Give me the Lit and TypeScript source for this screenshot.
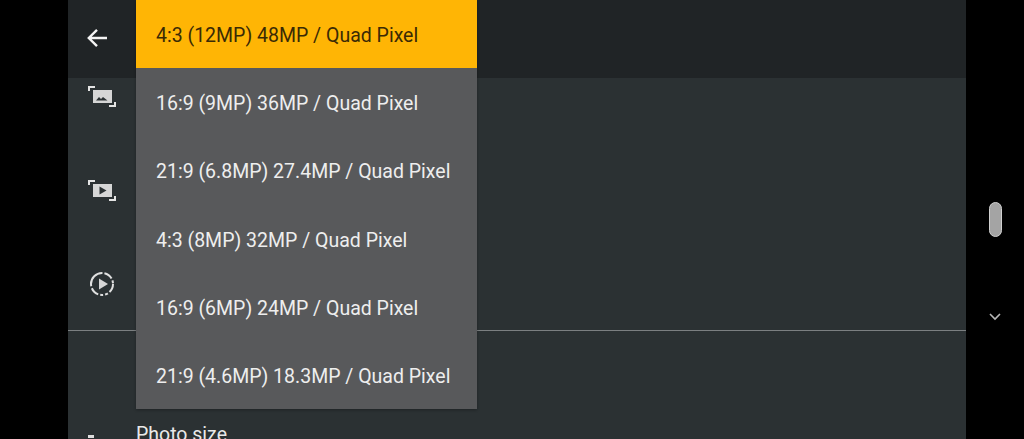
import { LitElement, html, css, svg } from "lit";
import { customElement } from "lit/decorators.js";

const ITEMS = [
  "4:3 (12MP) 48MP / Quad Pixel",
  "16:9 (9MP) 36MP / Quad Pixel",
  "21:9 (6.8MP) 27.4MP / Quad Pixel",
  "4:3 (8MP) 32MP / Quad Pixel",
  "16:9 (6MP) 24MP / Quad Pixel",
  "21:9 (4.6MP) 18.3MP / Quad Pixel",
];

const corners = svg`<path d="M1 6V2h6M27 17v4h-6" fill="none" stroke="#e4e4e4" stroke-width="2"/>`;

@customElement("app-root")
export class AppRoot extends LitElement {
  static styles = css`
    :host { display: block; width: 1024px; height: 439px; overflow: hidden; background: #000; font-family: Roboto, "Liberation Sans", sans-serif; }
    .screen { display: flex; height: 439px; overflow: hidden; }
    .panel { position: relative; width: 898px; margin-left: 68px; height: 439px; background: #2b3133; flex: none; overflow: hidden; }
    .header { height: 76px; padding-bottom: 2px; background: #202426; display: flex; align-items: center; padding-left: 17px; }
    .back { width: 24px; height: 24px; display: block; }
    .section { height: 252px; border-bottom: 1px solid #7b7f81; display: flex; flex-direction: column; padding-left: 20px; }
    .ic { display: block; width: 28px; height: 23px; }
    .ic1 { margin-top: 7px; }
    .ic2 { margin-top: 71px; }
    .ic3 { margin-top: 68px; width: 28px; height: 28px; }
    .lower { display: flex; padding-top: 93px; padding-left: 68px; position: relative; }
    .label { color: #e9e9e9; font-size: 19.5px; line-height: 22px; white-space: nowrap; }
    .stub { position: absolute; left: 20px; top: 104px; width: 6px; height: 3px; background: #ddd; }
    .menu { position: absolute; left: 68px; top: 0; width: 341px; height: 409px; background: #58595b; display: flex; flex-direction: column; box-shadow: 0 1px 3px rgba(0,0,0,.3); }
    .item { flex: 1; display: flex; align-items: center; padding-left: 20px; padding-top: 3px; font-size: 19.5px; color: #eeeeee; white-space: nowrap; }
    .item.sel { background: #ffb505; color: #3a2a05; }
    .rail { flex: 1; display: flex; flex-direction: column; align-items: center; }
    .thumb { width: 13px; height: 35px; margin-top: 202px; border-radius: 6.5px; background: #a4a4a4; border: 1px solid #d0d0d0; box-sizing: border-box; }
    .chev { width: 14px; height: 9px; margin-top: 75px; display: block; }
  `;

  render() {
    return html`
      <div class="screen">
        <div class="panel">
          <div class="header">
            <svg class="back" viewBox="0 0 24 24"><path d="M22 12H4.5M12 3.8L3.8 12l8.2 8.2" fill="none" stroke="#f4f4f4" stroke-width="2.4"/></svg>
          </div>
          <div class="section">
            <svg class="ic ic1" viewBox="0 0 28 23">${corners}
              <rect x="5" y="5" width="19" height="13" fill="#d6d6d6"/>
              <path d="M8 15.5l3-3.6 2 2 2-2 4.5 3.6z" fill="#2b3133"/></svg>
            <svg class="ic ic2" viewBox="0 0 28 23">${corners}
              <rect x="5" y="5" width="19" height="13" fill="#d6d6d6"/>
              <path d="M11.5 7.5l7 4-7 4z" fill="#2b3133"/></svg>
            <svg class="ic ic3" viewBox="0 0 28 28">
              <circle cx="14" cy="14" r="11" fill="none" stroke="#e0e0e0" stroke-width="2" stroke-dasharray="9 2 3 2 3 2 9 2 20 2"/>
              <path d="M11 8.5l9 5.5-9 5.5z" fill="#d6d6d6"/></svg>
          </div>
          <div class="lower">
            <div class="stub"></div>
            <div class="label">Photo size</div>
          </div>
          <div class="menu">
            ${ITEMS.map((t, i) => html`<div class="item ${i === 0 ? "sel" : ""}">${t}</div>`)}
          </div>
        </div>
        <div class="rail">
          <div class="thumb"></div>
          <svg class="chev" viewBox="0 0 14 9"><path d="M2 2l5 5 5-5" fill="none" stroke="#b8b8b8" stroke-width="1.6"/></svg>
        </div>
      </div>
    `;
  }
}
